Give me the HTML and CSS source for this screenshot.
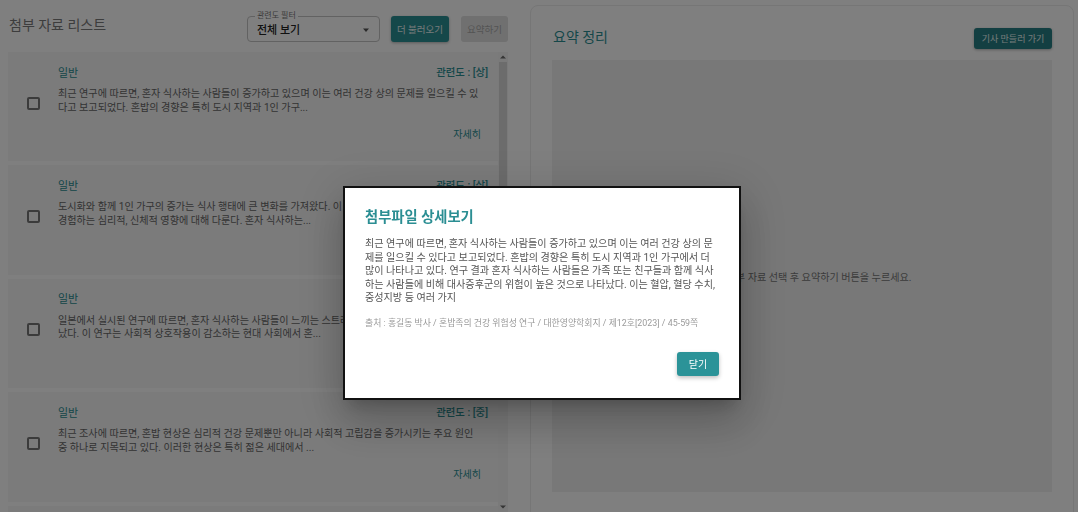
FILE: index.html
```html
<!DOCTYPE html>
<html lang="ko">
<head>
<meta charset="utf-8">
<title>첨부 자료 리스트</title>
<link rel="stylesheet" href="styles.css">
</head>
<body>
<div class="app">
  <section class="left">
    <header class="left-head">
      <h2 class="left-title">첨부 자료 리스트</h2>
      <div class="controls">
        <div class="select">
          <span class="select-label">관련도 필터</span>
          <span class="select-value">전체 보기</span>
          <svg class="select-arrow" width="10" height="10" viewBox="0 0 10 10"><path d="M2 3.5h6L5 7z" fill="#555"/></svg>
        </div>
        <button class="btn btn-primary">더 불러오기</button>
        <button class="btn btn-disabled">요약하기</button>
      </div>
    </header>
    <div class="list-wrap">
      <div class="list">
        <article class="card">
          <div class="check"><span class="box"></span></div>
          <div class="card-body">
            <div class="card-head"><span class="cat">일반</span><span class="rel">관련도 : [상]</span></div>
            <p class="card-text">최근 연구에 따르면, 혼자 식사하는 사람들이 증가하고 있으며 이는 여러 건강 상의 문제를 일으킬 수 있다고 보고되었다. 혼밥의 경향은 특히 도시 지역과 1인 가구...</p>
            <div class="card-foot"><button class="link">자세히</button></div>
          </div>
        </article>
        <article class="card">
          <div class="check"><span class="box"></span></div>
          <div class="card-body">
            <div class="card-head"><span class="cat">일반</span><span class="rel">관련도 : [상]</span></div>
            <p class="card-text">도시화와 함께 1인 가구의 증가는 식사 행태에 큰 변화를 가져왔다. 이 연구는 혼자 밥을 먹는 사람들이 경험하는 심리적, 신체적 영향에 대해 다룬다. 혼자 식사하는...</p>
            <div class="card-foot"><button class="link">자세히</button></div>
          </div>
        </article>
        <article class="card">
          <div class="check"><span class="box"></span></div>
          <div class="card-body">
            <div class="card-head"><span class="cat">일반</span><span class="rel">관련도 : [중]</span></div>
            <p class="card-text">일본에서 실시된 연구에 따르면, 혼자 식사하는 사람들이 느끼는 스트레스 수준이 더 높은 것으로 나타났다. 이 연구는 사회적 상호작용이 감소하는 현대 사회에서 혼...</p>
            <div class="card-foot"><button class="link">자세히</button></div>
          </div>
        </article>
        <article class="card">
          <div class="check"><span class="box"></span></div>
          <div class="card-body">
            <div class="card-head"><span class="cat">일반</span><span class="rel">관련도 : [중]</span></div>
            <p class="card-text">최근 조사에 따르면, 혼밥 현상은 심리적 건강 문제뿐만 아니라 사회적 고립감을 증가시키는 주요 원인 중 하나로 지목되고 있다. 이러한 현상은 특히 젊은 세대에서 ...</p>
            <div class="card-foot"><button class="link">자세히</button></div>
          </div>
        </article>
        <article class="card">
          <div class="check"><span class="box"></span></div>
          <div class="card-body">
            <div class="card-head"><span class="cat">일반</span><span class="rel">관련도 : [하]</span></div>
            <p class="card-text">혼자 식사하는 습관은 식사 속도와 영양 균형에도 영향을 미치는 것으로 나타났다. 연구진은 규칙적인 식사와 균형 잡힌 식단의 중요성을 강조하며...</p>
            <div class="card-foot"><button class="link">자세히</button></div>
          </div>
        </article>
      </div>
      <div class="scrollbar" aria-hidden="true">
        <span class="sb-btn"><svg width="6" height="4" viewBox="0 0 6 4"><path d="M0 3.5L3 0.5L6 3.5z" fill="#6a6a6a"/></svg></span>
        <span class="sb-track"><span class="sb-thumb"></span></span>
        <span class="sb-btn"><svg width="6" height="4" viewBox="0 0 6 4"><path d="M0 0.5L3 3.5L6 0.5z" fill="#6a6a6a"/></svg></span>
      </div>
    </div>
  </section>
  <section class="right">
    <header class="right-head">
      <h2 class="right-title">요약 정리</h2>
      <button class="btn btn-dark">기사 만들러 가기</button>
    </header>
    <div class="summary">
      <p class="summary-hint">첨부 자료 선택 후 요약하기 버튼을 누르세요.</p>
    </div>
  </section>
</div>

<div class="overlay">
  <div class="modal">
    <h3 class="modal-title">첨부파일 상세보기</h3>
    <p class="modal-text">최근 연구에 따르면, 혼자 식사하는 사람들이 증가하고 있으며 이는 여러 건강 상의 문제를 일으킬 수 있다고 보고되었다. 혼밥의 경향은 특히 도시 지역과 1인 가구에서 더 많이 나타나고 있다. 연구 결과 혼자 식사하는 사람들은 가족 또는 친구들과 함께 식사하는 사람들에 비해 대사증후군의 위험이 높은 것으로 나타났다. 이는 혈압, 혈당 수치, 중성지방 등 여러 가지</p>
    <p class="modal-source">출처 : 홍길동 박사 / 혼밥족의 건강 위험성 연구 / 대한영양학회지 / 제12호[2023] / 45-59쪽</p>
    <div class="modal-actions"><button class="btn btn-close">닫기</button></div>
  </div>
</div>
</body>
</html>
```

FILE: styles.css
```css
* { box-sizing: border-box; }

html, body {
  margin: 0;
  height: 512px;
  overflow: hidden;
  background: #ffffff;
  font-family: Roboto, "Noto Sans CJK KR", sans-serif;
  color: #333;
}

.app {
  display: flex;
  gap: 22px;
  padding-left: 8px;
  height: 512px;
}

/* ---------- left column ---------- */
.left {
  width: 500px;
  display: flex;
  flex-direction: column;
}

.left-head {
  height: 52px;
  flex: none;
  display: flex;
  justify-content: space-between;
  align-items: flex-start;
}

.left-title {
  margin: 15px 0 0 1px;
  font-size: 14px;
  line-height: 20px;
  font-weight: 400;
  color: #7a7a7a;
}

.controls {
  margin-top: 16px;
  display: flex;
  gap: 11px;
}

.select {
  position: relative;
  width: 133px;
  height: 26px;
  border: 1px solid #c4c4c4;
  border-radius: 4px;
  display: flex;
  align-items: center;
  padding-left: 9px;
}

.select-label {
  position: absolute;
  top: -6px;
  left: 7px;
  padding: 0 2px;
  background: #fff;
  font-size: 8px;
  line-height: 10px;
  color: #777;
}

.select-value {
  font-size: 11px;
  font-weight: 500;
  color: #222;
}

.select-arrow {
  position: absolute;
  right: 8px;
  top: 8px;
}

.btn {
  border: 0;
  font-family: inherit;
  border-radius: 3px;
  padding: 0;
  cursor: pointer;
}

.btn-primary {
  width: 58px;
  height: 26px;
  background: #2b9095;
  color: #e8f4f4;
  font-size: 9.5px;
  box-shadow: 0 1px 3px rgba(0,0,0,0.3);
}

.btn-disabled {
  width: 47px;
  height: 26px;
  background: #e0e0e0;
  color: #a8a8a8;
  font-size: 9.5px;
  margin-left: 1px;
}

.list-wrap {
  height: 460px;
  display: flex;
}

.list {
  flex: 1;
  min-width: 0;
  overflow: hidden;
}

.scrollbar {
  width: 10px;
  flex: none;
  display: flex;
  flex-direction: column;
  background: #f5f5f5;
}

.sb-btn {
  height: 10px;
  flex: none;
  display: flex;
  align-items: center;
  justify-content: center;
}

.sb-track {
  flex: 1;
  padding: 0 1px;
}

.sb-thumb {
  display: block;
  height: 278px;
  background: #d8d8d8;
}

.card {
  background: #f6f6f6;
  margin-bottom: 4px;
  padding: 11px 10px 16px 19px;
  display: flex;
  align-items: center;
}

.check {
  width: 31px;
  flex: none;
  display: flex;
  margin-bottom: 2px;
}

.box {
  width: 13px;
  height: 13px;
  border: 2px solid #767676;
  border-radius: 2px;
}

.card-body {
  flex: 1;
  min-width: 0;
}

.card-head {
  display: flex;
  justify-content: space-between;
  align-items: center;
  height: 17px;
}

.cat {
  font-size: 11px;
  color: #2b8e93;
}

.rel {
  font-size: 10.4px;
  font-weight: 500;
  color: #2b8e93;
}

.card-text {
  margin: 7px 0 0;
  padding-right: 8px;
  font-size: 10.1px;
  line-height: 13.7px;
  color: #666;
  height: 27.4px;
  overflow: hidden;
}

.card-foot {
  margin-top: 7px;
  display: flex;
  justify-content: flex-end;
}

.link {
  height: 24px;
  padding: 0 7px;
  border: 0;
  background: transparent;
  font-family: inherit;
  font-size: 10.1px;
  color: #2b8e93;
}

/* ---------- right column ---------- */
.right {
  width: 544px;
  margin-top: 5px;
  height: 540px;
  border: 1px solid #ececec;
  border-radius: 8px;
  padding: 0 21px;
  display: flex;
  flex-direction: column;
}

.right-head {
  height: 54px;
  flex: none;
  display: flex;
  justify-content: space-between;
  align-items: flex-start;
}

.right-title {
  margin: 21px 0 0 1px;
  font-size: 14px;
  line-height: 20px;
  font-weight: 400;
  color: #2b8e93;
}

.btn-dark {
  margin-top: 22px;
  width: 78px;
  height: 21px;
  background: #267f84;
  color: #e8f4f4;
  font-size: 9px;
  box-shadow: 0 1px 3px rgba(0,0,0,0.3);
}

.summary {
  height: 432px;
  flex: none;
  background: #f1f1f1;
  display: flex;
  align-items: center;
  justify-content: center;
  padding-left: 34px;
}

.summary-hint {
  margin: 0;
  font-size: 10.1px;
  color: #777;
}

/* ---------- modal ---------- */
.overlay {
  position: fixed;
  inset: 0;
  background: rgba(0,0,0,0.5);
}

.modal {
  position: absolute;
  left: 343px;
  top: 186px;
  width: 398px;
  height: 214px;
  background: #fff;
  border: 2px solid #111;
  padding: 19px 20px 20px;
  box-shadow: 0 11px 15px -7px rgba(0,0,0,0.2), 0 24px 38px 3px rgba(0,0,0,0.14), 0 9px 46px 8px rgba(0,0,0,0.12);
}

.modal-title {
  margin: 0;
  font-size: 14.3px;
  line-height: 20px;
  font-weight: 700;
  color: #2b8e93;
}

.modal-text {
  margin: 10px 0 0;
  font-size: 10.1px;
  line-height: 13.5px;
  color: #555;
}

.modal-source {
  margin: 13px 0 0;
  font-size: 8.9px;
  line-height: 11px;
  color: #9a9a9a;
}

.modal-actions {
  margin-top: 23px;
  display: flex;
  justify-content: flex-end;
}

.btn-close {
  width: 42px;
  height: 24px;
  background: #2b9398;
  color: #fff;
  font-size: 10px;
  border-radius: 3px;
  box-shadow: 0 2px 4px rgba(0,0,0,0.25);
}
```
